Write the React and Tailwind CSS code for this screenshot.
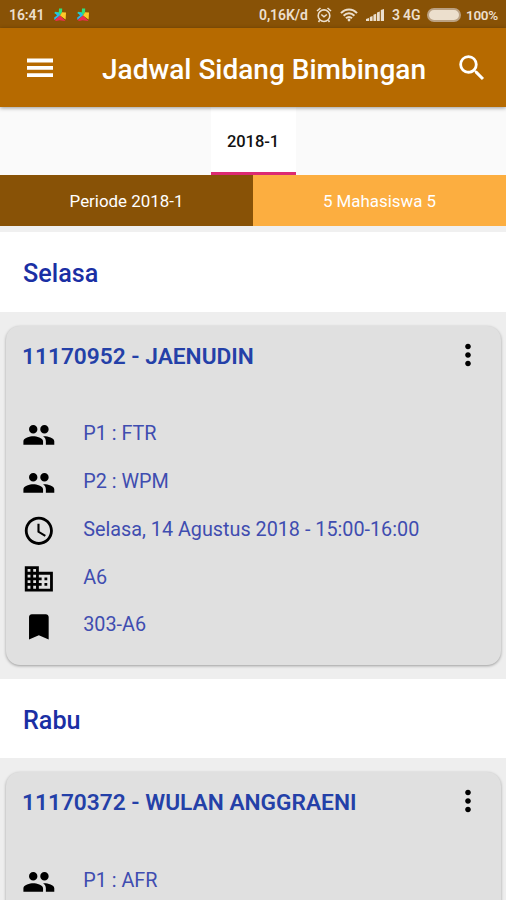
import { MdAccessTime, MdBookmark, MdBusiness, MdMoreVert, MdPeople, MdSearch } from "react-icons/md";

const schedule = [
    {
        day: "Selasa",
        student: "11170952 - JAENUDIN",
        rows: [
            { icon: MdPeople, text: "P1 : FTR" },
            { icon: MdPeople, text: "P2 : WPM" },
            { icon: MdAccessTime, text: "Selasa, 14 Agustus 2018 - 15:00-16:00" },
            { icon: MdBusiness, text: "A6" },
            { icon: MdBookmark, text: "303-A6" },
        ],
    },
    {
        day: "Rabu",
        student: "11170372 - WULAN ANGGRAENI",
        rows: [{ icon: MdPeople, text: "P1 : AFR" }],
    },
];

function AppBadge() {
    return (
        <svg viewBox="0 0 12 14" className="h-3.5 w-3">
            <path d="M5 0.5 8.2 0.5 8 4.2 6 7.5 0.5 5.5 1 3.8 4.8 4.2Z" fill="#2fe07c" />
            <path d="M0.5 4.2 4.5 4.8 6 7.5 3.5 9.5 0.3 12 0.2 9.5 3 7.5Z" fill="#28b9ee" />
            <path d="M8 4.2 12 4.5 11.6 11.5 6 7.5Z" fill="#ffc928" />
            <path d="M6 7.5 11.5 13 5.5 12.2 2 13 0.8 12Z" fill="#ee2c50" />
        </svg>
    );
}

function StatusBar() {
    return (
        <div className="flex h-7 items-center justify-between bg-[#885206] pt-0.5 pr-2 pl-[9px] text-[14px] font-semibold text-[#ecdfcd]">
            <div className="flex items-center">
                <span className="w-[45px] tracking-[-0.1px]">16:41</span>
                <AppBadge />
                <span className="w-[11px]" />
                <AppBadge />
            </div>
            <div className="flex items-center whitespace-nowrap">
                <span className="-ml-px w-[57px] tracking-[-0.1px]">0,16K/d</span>
                <svg viewBox="0 0 16 16" className="size-4" fill="none" stroke="currentColor" strokeWidth="1.6">
                    <circle cx="8" cy="8.7" r="5.8" />
                    <path d="M1 4 4.5 1M15 4 11.5 1M5.3 7.5 8 9.8 10.8 7.5" />
                    <path d="M3.7 13.3 2.5 15M12.3 13.3 13.5 15" />
                </svg>
                <svg viewBox="0 0 18 14" className="ml-2 h-3.5 w-[18px]" fill="none" stroke="currentColor" strokeWidth="2">
                    <path d="M1 5.2C5.5 0.2 12.5 0.2 17 5.2M3.6 7.8C6.8 4.4 11.2 4.4 14.4 7.8M6 10.3C7.8 8.4 10.2 8.4 12 10.3" />
                    <circle cx="9" cy="12" r="1.4" fill="currentColor" stroke="none" />
                </svg>
                <svg viewBox="0 0 18 12" className="ml-2 h-3 w-[18px]" fill="currentColor">
                    <path d="M0 12V10L3 9V12ZM3.8 12V8L6.6 7V12ZM7.4 12V5.8L10.2 4.8V12ZM11 12V3.4L13.8 2.4V12ZM14.8 12V1L18 0V12Z" />
                </svg>
                <span className="ml-2 w-[35px] tracking-[-0.2px]">3 4G</span>
                <span className="h-3.5 w-[34px] rounded-full border-2 border-[#bba182] bg-[#ecdfcd]" />
                <span className="ml-[5px] w-[32px] text-[13.5px] tracking-[-0.3px]">100%</span>
            </div>
        </div>
    );
}

function TopBar() {
    return (
        <header className="relative z-10 flex h-[79px] items-center bg-[#b66a00] pr-[17px] pl-[27px] text-white shadow-[0_1px_4px_rgba(0,0,0,0.4)]">
            <svg viewBox="0 0 26 20" className="h-5 w-[26px]" fill="currentColor">
                <path d="M0 0.5H26V4.5H0ZM0 8H26V11.7H0ZM0 15.3H26V19H0Z" />
            </svg>
            <h1 className="ml-[49px] flex-1 pt-1 text-[28px] font-medium whitespace-nowrap">Jadwal Sidang Bimbingan</h1>
            <MdSearch className="size-[34px]" />
        </header>
    );
}

function ScheduleCard({ student, rows }) {
    return (
        <div className="h-[367px] bg-[#eeeeee] px-1.5 pt-3.5">
            <div className="h-[339px] w-[495px] rounded-[14px] bg-[#e0e0e0] pt-3 pl-4 shadow-[0_1px_3px_rgba(0,0,0,0.35)]">
                <div className="flex h-[67.3px] items-start justify-between pr-4">
                    <h3 className="pt-1 text-[22.7px] leading-[30px] font-semibold whitespace-nowrap text-[#2440a8]">{student}</h3>
                    <MdMoreVert className="size-[34px] text-black" />
                </div>
                <ul>
                    {rows.map(({ icon: Icon, text }) => (
                        <li key={text} className="flex h-[47.8px] items-center">
                            <Icon className="mt-[13px] -ml-[0.5px] size-[33.7px] text-black" />
                            <span className="mt-[10.5px] ml-[28px] text-[19.8px] whitespace-nowrap text-[#3f4db0]">{text}</span>
                        </li>
                    ))}
                </ul>
            </div>
        </div>
    );
}

export default function App() {
    return (
        <div className="h-[900px] w-[506px] overflow-hidden bg-white font-[Roboto,sans-serif]">
            <StatusBar />
            <TopBar />
            <nav className="flex h-[68px] justify-center bg-[#fafafa]">
                <div className="flex w-[85px] items-center justify-center border-b-[3px] border-[#dc2a72] bg-white pt-[5px] text-[16.5px] font-medium tracking-[-0.1px] text-[#111]">
                    2018-1
                </div>
            </nav>
            <div className="grid h-[50.5px] grid-cols-2 text-center text-[16.9px] text-white">
                <div className="flex items-center justify-center bg-[#885206] pt-0.5">Periode 2018-1</div>
                <div className="flex items-center justify-center bg-[#fcae40] pt-0.5">5 Mahasiswa 5</div>
            </div>
            <div className="h-[6.5px] bg-[#f0f0f0]" />
            {schedule.map(({ day, student, rows }) => (
                <section key={day}>
                    <h2 className="h-[79.6px] pt-[27px] pl-[23px] text-[25.2px] leading-[30px] font-medium text-[#1a2fa4]">{day}</h2>
                    <ScheduleCard student={student} rows={rows} />
                </section>
            ))}
        </div>
    );
}
